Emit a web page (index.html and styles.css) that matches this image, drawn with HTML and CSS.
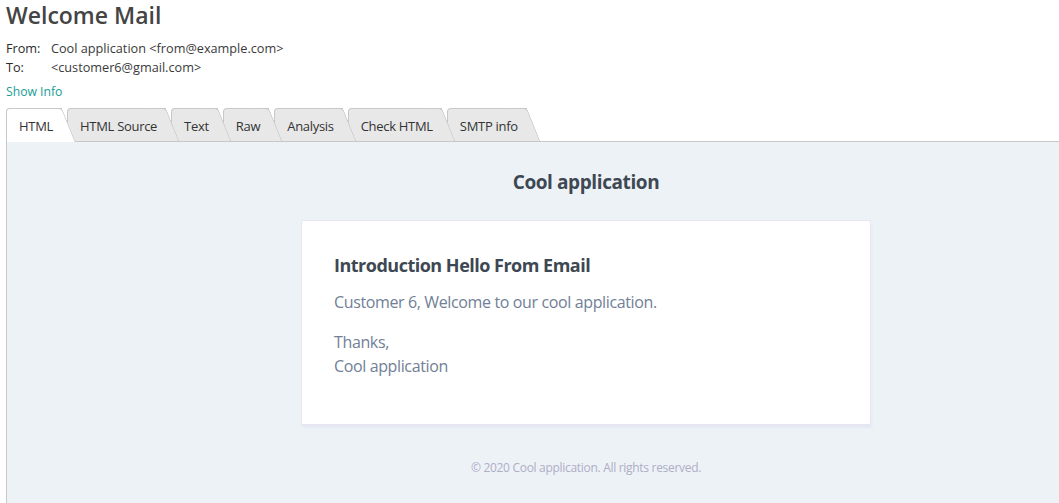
FILE: index.html
```html
<!DOCTYPE html>
<html lang="en">
<head>
<meta charset="utf-8">
<title>Welcome Mail</title>
<link rel="stylesheet" href="styles.css">
</head>
<body>
<div class="page">
  <h1 class="subject">Welcome Mail</h1>
  <div class="meta">
    <span class="meta-label">From:</span><span class="meta-value">Cool application &lt;from@example.com&gt;</span>
    <span class="meta-label">To:</span><span class="meta-value">&lt;customer6@gmail.com&gt;</span>
  </div>
  <a class="show-info" href="#">Show Info</a>
  <nav class="tabs">
    <a class="tab active" href="#">HTML</a>
    <a class="tab" href="#">HTML Source</a>
    <a class="tab" href="#">Text</a>
    <a class="tab" href="#">Raw</a>
    <a class="tab" href="#">Analysis</a>
    <a class="tab" href="#">Check HTML</a>
    <a class="tab" href="#">SMTP info</a>
  </nav>
  <div class="frame">
    <div class="mail-column">
      <div class="mail-header">Cool application</div>
      <div class="inner-body">
        <h2 class="mail-title">Introduction Hello From Email</h2>
        <p class="mail-text">Customer 6, Welcome to our cool application.</p>
        <p class="mail-text">Thanks,<br>Cool application</p>
      </div>
      <div class="mail-footer">© 2020 Cool application. All rights reserved.</div>
    </div>
  </div>
</div>
</body>
</html>
```
FILE: styles.css
```css
html, body {
  margin: 0;
  padding: 0;
  overflow: hidden;
  background: #ffffff;
}
body {
  font-family: "Open Sans", "Noto Sans", "Liberation Sans", sans-serif;
  color: #333333;
}
.page {
  padding: 0 0 0 6px;
  height: 503px;
  display: flex;
  flex-direction: column;
}
.subject {
  margin: 0;
  font-size: 23px;
  line-height: 30px;
  font-weight: 600;
  color: #444444;
}
.meta {
  margin-top: 9px;
  display: grid;
  grid-template-columns: 45px auto;
  justify-content: start;
  font-size: 12.7px;
  line-height: 19px;
  color: #3a3a3a;
}
.meta-label {
  font-weight: 400;
  color: #2a2a2a;
}
.show-info {
  margin-top: 6px;
  font-size: 12.2px;
  line-height: 18px;
  color: #1a9c96;
  text-decoration: none;
  align-self: flex-start;
}
.tabs {
  margin-top: 7px;
  display: flex;
  align-items: flex-end;
  height: 33px;
}
.tab {
  position: relative;
  height: 28px;
  line-height: 27px;
  padding: 4px 9px 0 12px;
  margin-right: 5px;
  background: #e8e8e8;
  border-top: 1px solid #c8c8c8;
  border-left: 1px solid #c8c8c8;
  border-top-left-radius: 4px;
  font-size: 13px;
  letter-spacing: -0.3px;
  color: #333333;
  text-decoration: none;
  white-space: nowrap;
}
.tab::after {
  content: "";
  position: absolute;
  z-index: -1;
  top: -1px;
  bottom: 0;
  right: 0;
  width: 16px;
  background: inherit;
  border-top: 1px solid #c8c8c8;
  border-right: 1px solid #c8c8c8;
  border-top-right-radius: 4px;
  transform: skewX(22deg);
  transform-origin: top right;
}
.tab.active {
  background: #ffffff;
  height: 29px;
  margin-bottom: -1px;
}
.tab:nth-child(1) { z-index: 7; }
.tab:nth-child(2) { z-index: 6; }
.tab:nth-child(3) { z-index: 5; }
.tab:nth-child(4) { z-index: 4; }
.tab:nth-child(5) { z-index: 3; }
.tab:nth-child(6) { z-index: 2; }
.tab:nth-child(7) { z-index: 1; }
.frame {
  flex: 1;
  min-width: 0;
  overflow: hidden;
  background: #edf2f7;
  border-top: 1px solid #c8c8c8;
  border-left: 1px solid #c8c8c8;
}
.mail-column {
  width: 570px;
  margin-left: 294px;
  display: flex;
  flex-direction: column;
}
.mail-header {
  padding: 27px 0 25px;
  font-size: 19px;
  line-height: 26px;
  font-weight: 700;
  letter-spacing: -0.4px;
  color: #3d4852;
  text-align: center;
}
.inner-body {
  box-sizing: border-box;
  width: 570px;
  padding: 32px 32px 30px;
  background: #ffffff;
  border: 1px solid #e8e5ef;
  border-radius: 2px;
  box-shadow: 0 2px 0 rgba(0, 0, 150, 0.025), 2px 4px 0 rgba(0, 0, 150, 0.015);
}
.mail-title {
  margin: 0 0 13px;
  font-size: 18px;
  line-height: 24px;
  font-weight: 700;
  letter-spacing: -0.5px;
  color: #3d4852;
}
.mail-text {
  margin: 0 0 16px;
  font-size: 16px;
  line-height: 24px;
  letter-spacing: -0.37px;
  color: #718096;
}
.mail-footer {
  padding: 34px 32px 32px;
  font-size: 12px;
  line-height: 18px;
  letter-spacing: -0.3px;
  color: #b0adc5;
  text-align: center;
}
```
